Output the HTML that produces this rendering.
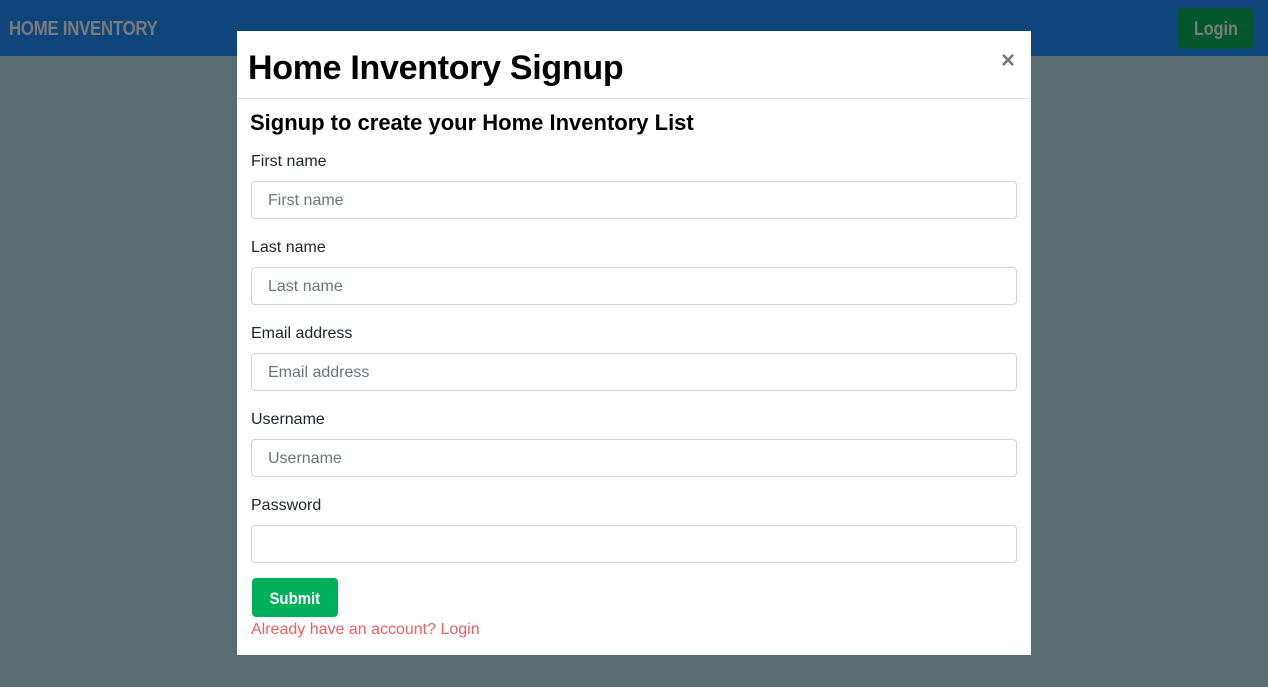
<!DOCTYPE html>
<html><head><style>
body{margin:0;width:1268px;height:687px;background:#586d71;font-family:"Liberation Sans",sans-serif;position:relative;overflow:hidden}
.nav{position:absolute;left:0;top:0;width:1268px;height:56px;background:#0e457b}
.brand{position:absolute;left:9px;top:18px;font-size:20px;font-weight:bold;color:#7b7b7b;transform:scaleX(0.84);transform-origin:left;letter-spacing:-0.3px}
.login{position:absolute;left:1178px;top:8px;width:75px;height:41px;background:#04572d;border-radius:4px;color:#7b7b7b;font-size:19px;font-weight:bold;text-align:center;line-height:43px}
.login span{display:inline-block;transform:scaleX(0.85)}
.modal{position:absolute;left:237px;top:31px;width:794px;height:624px;background:#fff}
.hd{height:67px;border-bottom:1px solid #dee2e6;position:relative}
.hd h1{margin:0;position:absolute;left:11px;top:18px;font-size:34px;font-weight:bold;color:#000;letter-spacing:-0.3px}
.x{position:absolute;left:764px;top:16px;font-size:24px;font-weight:bold;color:#777}
h2{position:absolute;left:13px;top:79px;margin:0;font-size:22px;font-weight:bold;color:#000}
.lbl{position:absolute;left:14px;font-size:16px;color:#212529}
.in{position:absolute;left:14px;width:764px;height:36px;border:1px solid #ced4da;border-radius:4px;font-size:16px;color:#6c757d;line-height:38px;text-indent:16px;box-sizing:content-box}
.sub{position:absolute;left:15px;top:547px;width:86px;height:39px;background:#00b159;border-radius:4px;color:#fff;font-weight:bold;font-size:17px;text-align:center;line-height:42px}
.sub span{display:inline-block;transform:scaleX(0.88)}
.al{position:absolute;left:14px;top:590px;font-size:16px;color:#ee5f5f}
</style></head><body>
<div class="nav"><div class="brand">HOME INVENTORY</div><div class="login"><span>Login</span></div></div>
<div class="modal">
<div class="hd"><h1>Home Inventory Signup</h1><div class="x">×</div></div>
<h2>Signup to create your Home Inventory List</h2>
<div class="lbl" style="top:122px">First name</div><div class="in" style="top:150px">First name</div>
<div class="lbl" style="top:208px">Last name</div><div class="in" style="top:236px">Last name</div>
<div class="lbl" style="top:294px">Email address</div><div class="in" style="top:322px">Email address</div>
<div class="lbl" style="top:380px">Username</div><div class="in" style="top:408px">Username</div>
<div class="lbl" style="top:466px">Password</div><div class="in" style="top:494px"></div>
<div class="sub"><span>Submit</span></div>
<div class="al">Already have an account? Login</div>
</div>
</body></html>
